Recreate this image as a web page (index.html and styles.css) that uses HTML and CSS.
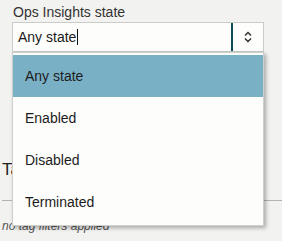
FILE: index.html
```html
<!DOCTYPE html>
<html lang="en">
<head>
    <meta charset="UTF-8">
    <meta name="viewport" content="width=device-width, initial-scale=1.0">
    <title>Ops Insights filters</title>
    <link rel="stylesheet" href="styles.css">
</head>
<body>
    <div class="filters">
        <!-- State select -->
        <div class="field">
            <label class="field-label" for="state">Ops Insights state</label>
            <div class="select">
                <div class="select-value" id="state">Any state<span class="caret"></span></div>
                <div class="select-toggle">
                    <svg width="10" height="14" viewBox="0 0 10 14">
                        <path d="M2 5.5 L5 2.5 L8 5.5" fill="none" stroke="#2b2b2b" stroke-width="1.4"/>
                        <path d="M2 8.5 L5 11.5 L8 8.5" fill="none" stroke="#2b2b2b" stroke-width="1.4"/>
                    </svg>
                </div>
            </div>

            <!-- Open listbox -->
            <ul class="listbox">
                <li class="option selected">Any state</li>
                <li class="option">Enabled</li>
                <li class="option">Disabled</li>
                <li class="option">Terminated</li>
            </ul>
        </div>

        <!-- Tag filters, under the listbox -->
        <div class="tags">
            <h3 class="tags-title">Tag filters</h3>
            <div class="tags-empty">no tag filters applied</div>
        </div>
    </div>
</body>
</html>
```

FILE: styles.css
```css
/* Page */
body {
    margin: 0;
    font-family: "Liberation Sans", Arial, sans-serif;
    font-size: 14px;
    color: #222222;
    background: #f2f2f0;
}

/* State field */
.field {
    position: relative;
    margin: 0 18px 0 12px;
}

.field-label {
    display: block;
    padding: 2px 0 0 1px;
    line-height: 20px;
    color: #333333;
}

.select {
    display: flex;
    height: 30px;
    border: 1px solid #cbcbc9;
    background: #fdfdfb;
    box-sizing: border-box;
}

.select-value {
    flex: 1;
    display: flex;
    align-items: center;
    padding-left: 5px;
    color: #1a1a1a;
}

.caret {
    width: 1px;
    height: 16px;
    margin-left: 1px;
    background: #111111;
}

.select-toggle {
    width: 30px;
    display: flex;
    align-items: center;
    justify-content: center;
    border-left: 2px solid #0f4b5b;
}

/* Listbox */
.listbox {
    position: absolute;
    top: 52px;
    left: 0;
    width: 250px;
    margin: 0;
    padding: 2px 0;
    list-style: none;
    background: #fdfdfb;
    border: 1px solid #cfcfcd;
    box-shadow: 2px 2px 4px rgba(0, 0, 0, 0.3);
    z-index: 2;
}

.option {
    height: 42px;
    line-height: 43px;
    padding-left: 12px;
    color: #1c1c1c;
}

.option.selected {
    background: #7ab0c6;
}

/* Tag filters */
.tags {
    padding: 108px 0 0 2px;
}

.tags-title {
    margin: 0;
    font-size: 17px;
    font-weight: normal;
    line-height: 20px;
    color: #222222;
    padding-bottom: 20px;
    border-bottom: 1px solid #b4b4b2;
}

.tags-empty {
    margin-top: 17px;
    font-size: 12px;
    font-style: italic;
    line-height: 16px;
    color: #555555;
}
```
